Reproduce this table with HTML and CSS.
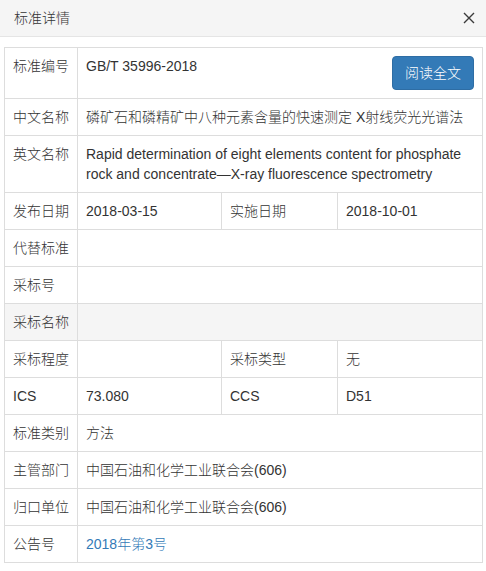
FILE: index.html
```html
<!DOCTYPE html>
<html lang="zh-CN">
<head>
<meta charset="utf-8">
<title>标准详情</title>
<link rel="stylesheet" href="styles.css">
</head>
<body>
<div class="modal">
  <div class="modal-header">
    <span class="modal-title zh">标准详情</span>
    <button class="close" type="button" aria-label="关闭">
      <svg width="12" height="12" viewBox="0 0 12 12"><path d="M1 1 L11 11 M11 1 L1 11" stroke="#3a3a3a" stroke-width="1.4" fill="none"/></svg>
    </button>
  </div>
  <div class="modal-body">
    <table class="detail">
      <colgroup>
        <col class="c1"><col class="c2"><col class="c3"><col class="c4">
      </colgroup>
      <tbody>
        <tr><td class="zh">标准编号</td><td colspan="3"><button class="btn-read zh" type="button">阅读全文</button>GB/T 35996-2018</td></tr>
        <tr><td class="zh">中文名称</td><td colspan="3"><span class="zh">磷矿石和磷精矿中八种元素含量的快速测定</span> X<span class="zh">射线荧光光谱法</span></td></tr>
        <tr><td class="zh">英文名称</td><td colspan="3">Rapid determination of eight elements content for phosphate rock and concentrate—X-ray fluorescence spectrometry</td></tr>
        <tr><td class="zh">发布日期</td><td>2018-03-15</td><td class="zh">实施日期</td><td>2018-10-01</td></tr>
        <tr><td class="zh">代替标准</td><td colspan="3"></td></tr>
        <tr><td class="zh">采标号</td><td colspan="3"></td></tr>
        <tr class="hover"><td class="zh">采标名称</td><td colspan="3"></td></tr>
        <tr><td class="zh">采标程度</td><td></td><td class="zh">采标类型</td><td class="zh">无</td></tr>
        <tr><td>ICS</td><td>73.080</td><td>CCS</td><td>D51</td></tr>
        <tr><td class="zh">标准类别</td><td colspan="3" class="zh">方法</td></tr>
        <tr><td class="zh">主管部门</td><td colspan="3"><span class="zh">中国石油和化学工业联合会</span>(606)</td></tr>
        <tr><td class="zh">归口单位</td><td colspan="3"><span class="zh">中国石油和化学工业联合会</span>(606)</td></tr>
        <tr><td class="zh">公告号</td><td colspan="3"><a class="link" href="#">2018<span class="zh">年第</span>3<span class="zh">号</span></a></td></tr>
      </tbody>
    </table>
  </div>
</div>
</body>
</html>
```

FILE: styles.css
```css
html, body {
  margin: 0;
  padding: 0;
  background: #fff;
}
body {
  font-family: "Liberation Sans", "Noto Sans CJK SC", sans-serif;
  font-size: 14px;
  font-weight: 400;
  line-height: 20px;
  color: #333;
}
.zh {
  font-weight: 300;
}
.modal {
  width: 486px;
}
.modal-header {
  box-sizing: content-box;
  height: 20px;
  padding: 8px 10px 8px 14px;
  background: #f5f5f5;
  border-bottom: 1px solid #e5e5e5;
  display: flex;
  align-items: center;
  justify-content: space-between;
}
.modal-title {
  font-size: 14px;
  line-height: 20px;
  color: #333;
}
.close {
  border: 0;
  background: transparent;
  padding: 0;
  width: 12px;
  height: 12px;
  display: flex;
  margin-right: 1px;
  cursor: pointer;
}
.modal-body {
  padding: 10px 3px 0 4px;
}
.detail {
  width: 479px;
  table-layout: fixed;
  border-collapse: collapse;
  border-spacing: 0;
}
.c1 { width: 73px; }
.c2 { width: 144px; }
.c3 { width: 116px; }
.c4 { width: 145px; }
.detail td {
  border: 1px solid #ddd;
  padding: 8px;
  vertical-align: top;
  line-height: 20px;
  height: 20px;
}
.detail tr.hover td {
  background: #f5f5f5;
}
.btn-read {
  float: right;
  font-family: inherit;
  font-size: 14px;
  line-height: 20px;
  padding: 6px 12px;
  color: #fff;
  background: #337ab7;
  border: 1px solid #2e6da4;
  border-radius: 4px;
  cursor: pointer;
}
.link {
  color: #337ab7;
  text-decoration: none;
}
```
